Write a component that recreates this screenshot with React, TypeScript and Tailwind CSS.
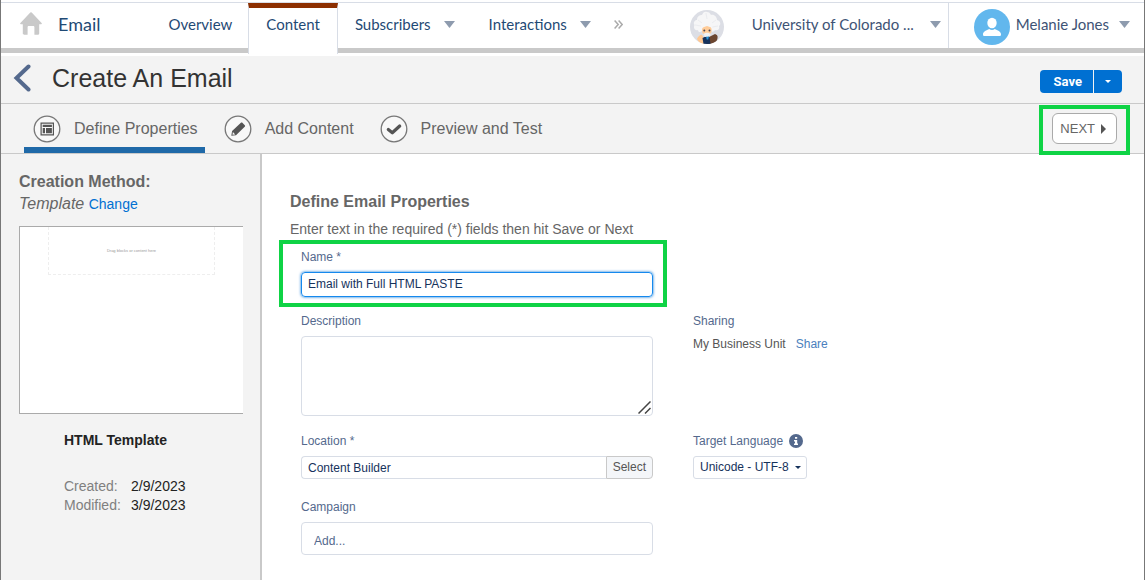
import React, { useState } from "react";

type StepId = "define" | "content" | "preview";

/**
 * Steps of the email creation flow
 */
const STEPS: { id: StepId; label: string }[] = [
  { id: "define", label: "Define Properties" },
  { id: "content", label: "Add Content" },
  { id: "preview", label: "Preview and Test" },
];

const LANGUAGES = ["Unicode - UTF-8", "Japanese", "Korean"];

const HomeIcon = () => (
  <svg width="22" height="23" viewBox="0 0 22 23" fill="#c9c9c9" aria-hidden="true">
    <path d="M10.3.6a1 1 0 0 1 1.4 0l9.9 10.3c.5.6.2 1.3-.5 1.3h-1.9v9.3c0 .8-.4 1.2-1.2 1.2h-3.6v-7.4c0-.8-.4-1.2-1.2-1.2H8.8c-.8 0-1.2.4-1.2 1.2v7.4H4c-.8 0-1.2-.4-1.2-1.2v-9.3H.9c-.7 0-1-.7-.5-1.3z" />
  </svg>
);

const Caret = () => (
  <svg width="11" height="7" viewBox="0 0 11 7" fill="#8e9bae" aria-hidden="true" className="shrink-0">
    <path d="M0 0h11L5.5 7z" />
  </svg>
);

const SmallCaret = ({ className = "" }: { className?: string }) => (
  <svg width="6" height="3" viewBox="0 0 6 3" fill="currentColor" aria-hidden="true" className={className}>
    <path d="M0 0h6L3 3z" />
  </svg>
);

/** Mascot with white hair, brown jacket and blue tie */
const MascotAvatar = () => (
  <svg width="34" height="34" viewBox="0 0 34 34" aria-hidden="true" className="shrink-0">
    <defs>
      <clipPath id="mascot-clip">
        <circle cx="17" cy="17" r="17" />
      </clipPath>
    </defs>
    <g clipPath="url(#mascot-clip)">
      <rect width="34" height="34" fill="#dcdee5" />
      <path d="M7 29c1-2 3-5 5-4 1 1 2 3 1 5l1 4h-4z" fill="#ffc892" />
      <path d="M19 27l6-3c3 1 3 3 2 6l-2 4h-8z" fill="#6b4630" />
      <path d="M12.500 28l2-1 5 0 1 7h-7z" fill="#16325c" />
      <path d="M16 26h3l-.8 3.500h-1.500z" fill="#2a94d6" />
      <path
        d="M4.500 15c-2-3 1-5 2.500-5 0-4 3-5 5-5 1-3 3-4 5-3 2 0 3 1 4 3 3-1 6 2 6 5 4 1 4 5 2 6 1 3-1 5-4 4-1 2-3 2-4 1h-9c-2 2-4 1-4-1-3 1-5-2-3.500-5z"
        fill="#f6f6f7"
      />
      <path d="M16 3l1 6M8 10l4 3M26 10l-4 3M5 15l6 1M28 16l-6 1" stroke="#e5e7eb" strokeWidth=".7" fill="none" />
      <path d="M12.300 18c0-2 2-3 4.500-3s4.500 1 4.500 3c1 3 0 7-4.500 7s-5.500-4-4.500-7z" fill="#ffcc99" />
      <path d="M12 18.500c1-2 3-1.500 5-2.500 2 1 4 .5 5 2.500l1-5H11z" fill="#f6f6f7" />
      <circle cx="14.300" cy="20.500" r="1" fill="#4a4550" />
      <circle cx="19.500" cy="20.500" r="1" fill="#4a4550" />
      <path d="M13.500 24.300c1-2 6-2 7 0-.6 1.700-2 2.500-3.500 2.500s-3-.8-3.500-2.500z" fill="#f0f0f2" />
    </g>
  </svg>
);

const UserAvatar = () => (
  <svg width="36" height="36" viewBox="0 0 36 36" aria-hidden="true" className="shrink-0">
    <circle cx="18" cy="18" r="18" fill="#62b7ed" />
    <ellipse cx="18" cy="14" rx="4.700" ry="5.200" fill="#fff" />
    <path d="M9 25.400c0-3 3.600-4.200 6.200-5.400 1.600 1.200 4 1.200 5.600 0C23.400 21.200 27 22.400 27 25.400c0 1.200-.6 1.600-1.600 1.600H10.600C9.600 27 9 26.600 9 25.400z" fill="#fff" />
  </svg>
);

const StepIcon = ({ id }: { id: StepId }) => (
  <svg width="28" height="28" viewBox="0 0 28 28" aria-hidden="true" className="shrink-0">
    <circle cx="14" cy="14" r="12.800" fill="#f8f8f8" stroke="#777" strokeWidth="1.300" />
    {id === "define" && (
      <g fill="#555">
        <path d="M7.500 7.500h13.500v13H7.500zM8.700 8.700v10.600h11.100V8.700z" fillRule="evenodd" />
        <path d="M9.700 9.700h9.200v2.300H9.700zM9.700 13h2.300v5.300H9.700zM13 13h5.900v5.300H13z" />
      </g>
    )}
    {id === "content" && (
      <g>
        <path d="M7.300 20.700l.8-4.800 8.800-8.100c.5-.5 1-.5 1.500 0l2.400 2.500c.5.500.4 1-.1 1.500L12 20.200z" fill="#555" />
        <path d="M8.900 17l2.300 2.400-2.700.4z" fill="#f8f8f8" />
      </g>
    )}
    {id === "preview" && (
      <path d="M8.300 14.500l4 3.300 7.400-6.800" fill="none" stroke="#555" strokeWidth="3.200" strokeLinecap="round" strokeLinejoin="round" />
    )}
  </svg>
);

const InfoIcon = () => (
  <svg width="14" height="14" viewBox="0 0 14 14" aria-hidden="true">
    <circle cx="7" cy="7" r="7" fill="#54698d" />
    <path d="M6 3h2.200v1.800H6zM5 6h3.200v3.500H9V11H5V9.500h1V7.400H5z" fill="#fff" />
  </svg>
);

/** Green frame drawn around the element it is placed in */
const Highlight = ({ className }: { className: string }) => (
  <div className={`pointer-events-none absolute border-4 border-[#0fd345] ${className}`} />
);

const TopNav = () => (
  <header className="mt-[2px] border-t border-[#d8dde6] bg-white font-[Lato,sans-serif] text-[15px] text-[#1f4a75]">
    <div className="flex h-[50px] border-b-[5px] border-[#c9c9c9]">
      <div className="flex items-center pb-1 pl-[19px] pr-[52px]">
        <a href="#home" aria-label="Home">
          <HomeIcon />
        </a>
        <a href="#email" className="ml-4 text-lg">
          Email
        </a>
      </div>
      <nav className="flex">
        <a href="#overview" className="flex items-center px-4 pb-[2px]">
          Overview
        </a>
        <a
          href="#content"
          className="-mb-[6px] border-x border-t-[5px] border-x-[#d8dde6] border-t-[#8c2f00] bg-white px-[17px] pt-[5px]"
        >
          Content
        </a>
        <button type="button" className="flex items-center gap-[13px] px-[17px] pb-[2px]">
          Subscribers <Caret />
        </button>
        <button type="button" className="flex items-center gap-[13px] px-[17px] pb-[2px]">
          Interactions <Caret />
        </button>
        <button type="button" aria-label="More" className="px-[6px] pb-[2px] text-[#aaa]">
          <svg width="9" height="9" viewBox="0 0 9 9" fill="none" stroke="currentColor" strokeWidth="1.500" aria-hidden="true">
            <path d="M.6.6l3.600 3.900L.6 8.400M4.600.6l3.600 3.900-3.600 3.900" />
          </svg>
        </button>
      </nav>
      <div className="ml-auto flex text-[#3e5375]">
        <button type="button" className="flex items-center border-r border-[#d8dde6] pr-[7px] pt-[2px]">
          <MascotAvatar />
          <span className="flex items-center gap-4 pb-1 pl-7">
            University of Colorado ... <Caret />
          </span>
        </button>
        <button type="button" className="flex items-center pl-[25px] pr-[14px] pt-[2px]">
          <UserAvatar />
          <span className="flex items-center gap-[10px] pb-1 pl-[6px]">
            Melanie Jones <Caret />
          </span>
        </button>
      </div>
    </div>
  </header>
);

const TitleBar = () => (
  <div className="mt-[3px] flex h-12 items-center border-b border-[#c9c9c9] bg-[#f3f3f3] pl-3 pr-[22px]">
    <div className="flex items-center gap-[21px] pb-1">
      <a href="#back" aria-label="Back">
        <svg width="18" height="28" viewBox="0 0 18 28" fill="none" stroke="#54698d" strokeWidth="4" strokeLinecap="round" aria-hidden="true">
          <path d="M15.500 2.500L3.500 14l12 11.500" />
        </svg>
      </a>
      <h1 className="text-[25px] leading-8 text-[#333]">Create An Email</h1>
    </div>
    <div className="ml-auto mt-1 flex h-[23px] gap-px text-white">
      <button type="button" className="rounded-l bg-[#0070d2] pl-[14px] pr-[11px] font-[Roboto,sans-serif] text-[13px] font-bold">
        Save
      </button>
      <button type="button" aria-label="More save options" className="rounded-r bg-[#0070d2] px-[11px]">
        <SmallCaret />
      </button>
    </div>
  </div>
);

const StepBar = () => (
  <div className="flex h-[50px] border-b border-[#c9c9c9] bg-[#f3f3f3] pl-[23px] pr-[27px] text-base text-[#666]">
    {STEPS.map((step) => (
      <a
        key={step.id}
        href={`#${step.id}`}
        className={`flex items-center gap-[13px] pl-[9px] pr-[7px] ${
          step.id === "define" ? "border-b-[6px] border-[#1f69a8] pt-[6px]" : "ml-[10px]"
        }`}
      >
        <StepIcon id={step.id} />
        {step.label}
      </a>
    ))}
    <div className="relative my-[9px] ml-auto">
      <button
        type="button"
        className="flex h-[31px] items-center gap-[6px] rounded-md border border-[#aaa] bg-white pl-[7px] pr-[10px] text-[13px]"
      >
        NEXT
        <svg width="5" height="10" viewBox="0 0 5 10" fill="#555" aria-hidden="true">
          <path d="M0 0l5 5-5 5z" />
        </svg>
      </button>
      <Highlight className="-inset-x-[13px] -bottom-[11px] -top-2" />
    </div>
  </div>
);

const Sidebar = () => (
  <aside className="w-[261px] shrink-0 border-r-2 border-[#c9c9c9] bg-[#f3f3f3] pl-[18px] pr-[17px] pt-[17px]">
    <h2 className="text-base font-bold leading-[22px] text-[#666]">Creation Method:</h2>
    <p className="leading-[22px] text-[#666]">
      <em>Template</em>{" "}
      <a href="#change" className="text-sm text-[#0070d2]">
        Change
      </a>
    </p>
    <div className="mt-[11px] h-[188px] border-y border-l border-[#aaa] bg-white px-7">
      <div className="flex h-12 items-center justify-center border border-t-0 border-dashed border-[#eee] text-[4px] text-[#999]">
        Drag blocks or content here
      </div>
    </div>
    <div className="ml-[45px] mt-4 text-sm">
      <h3 className="font-bold text-[#222]">HTML Template</h3>
      <dl className="mt-[27px] grid grid-cols-[67px_1fr] leading-[19px] text-[#222]">
        <dt className="text-[#808080]">Created:</dt>
        <dd>2/9/2023</dd>
        <dt className="text-[#808080]">Modified:</dt>
        <dd>3/9/2023</dd>
      </dl>
    </div>
  </aside>
);

const PropertiesForm = () => {
  const [name, setName] = useState("Email with Full HTML PASTE");
  const [location, setLocation] = useState("Content Builder");

  return (
    <main className="min-w-0 flex-1 bg-white pb-6 pl-7 pr-6 pt-9">
      <h2 className="text-base font-bold text-[#666]">Define Email Properties</h2>
      <p className="mt-[5px] text-sm text-[#666]">Enter text in the required (*) fields then hit Save or Next</p>

      <form className="ml-[11px] mt-[10px] grid grid-cols-[352px_1fr] gap-x-10 text-xs text-[#54698d]">
        <div className="relative col-start-1">
          <label htmlFor="name" className="block">
            Name *
          </label>
          <input
            id="name"
            value={name}
            onChange={(e) => setName(e.target.value)}
            className="mt-[7px] block h-[25px] w-full rounded border border-[#1589ee] px-[6px] pb-[2px] text-[#16325c] shadow-[0_0_3px_#0070d2] outline-none"
          />
          <Highlight className="-bottom-[10px] -left-[22px] -right-[14px] -top-[9px]" />
        </div>

        <div className="col-start-1 mt-4">
          <label htmlFor="description" className="block">
            Description
          </label>
          <div className="relative mt-[7px]">
            <textarea id="description" className="block h-20 w-full resize-none rounded border border-[#d8dde6] p-2" />
            <svg
              width="13"
              height="13"
              viewBox="0 0 13 13"
              stroke="#444"
              strokeWidth="1.500"
              aria-hidden="true"
              className="absolute bottom-[2px] right-[2px]"
            >
              <path d="M.5 12.500l12-12M7 12.500l5.500-5.500" />
            </svg>
          </div>
        </div>
        <div className="mt-4">
          <h3>Sharing</h3>
          <p className="mt-[7px] text-[#555]">
            My Business Unit
            <a href="#share" className="ml-[10px] text-[#4a80bd]">
              Share
            </a>
          </p>
        </div>

        <div className="mt-[17px]">
          <label htmlFor="location" className="block">
            Location *
          </label>
          <div className="mt-[7px] flex h-[23px]">
            <input
              id="location"
              value={location}
              onChange={(e) => setLocation(e.target.value)}
              className="min-w-0 flex-1 rounded-l border border-r-0 border-[#d8dde6] px-[6px] text-[#16325c]"
            />
            <button type="button" className="rounded-r border border-[#c9c9c9] bg-[#f4f6f9] px-[6px] pb-[2px] text-[#555]">
              Select
            </button>
          </div>
        </div>
        <div className="mt-[17px]">
          <div className="flex items-center gap-[6px]">
            <label htmlFor="language">Target Language</label>
            <InfoIcon />
          </div>
          <div className="relative mt-[7px] w-[114px] text-[#16325c]">
            <select
              id="language"
              className="block h-[23px] w-full appearance-none rounded-[3px] border border-[#d8dde6] bg-white pb-[2px] pl-[6px]"
            >
              {LANGUAGES.map((language) => (
                <option key={language}>{language}</option>
              ))}
            </select>
            <SmallCaret className="pointer-events-none absolute right-[6px] top-[10px]" />
          </div>
        </div>

        <div className="col-start-1 mt-5">
          <label htmlFor="campaign" className="block">
            Campaign
          </label>
          <input
            id="campaign"
            placeholder="Add..."
            className="mt-[7px] block h-[33px] w-full rounded border border-[#d8dde6] px-3 pt-1 placeholder:text-[#54698d]"
          />
        </div>
      </form>
    </main>
  );
};

const App: React.FC = () => (
  <div className="flex min-h-screen flex-col border-x border-[#777] bg-white font-['Liberation_Sans',Arial,sans-serif]">
    <TopNav />
    <TitleBar />
    <StepBar />
    <div className="flex flex-1">
      <Sidebar />
      <PropertiesForm />
    </div>
  </div>
);

export default App;
